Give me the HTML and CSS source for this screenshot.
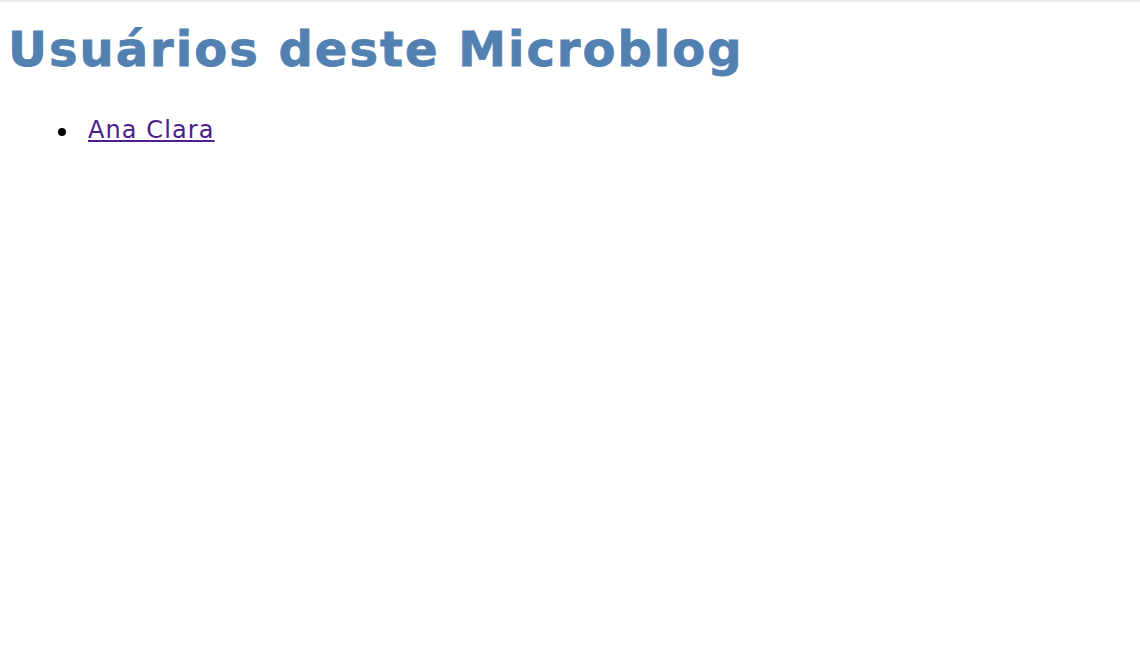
FILE: index.html
```html
<!DOCTYPE html>
<html lang="pt">
<head>
<meta charset="utf-8">
<title>Usuários deste Microblog</title>
<link rel="stylesheet" href="styles.css">
</head>
<body>
<div class="topbar"></div>
<main class="page">
  <h1 class="title">Usuários deste Microblog</h1>
  <ul class="users">
    <li class="user"><a class="user-link" href="#">Ana Clara</a></li>
  </ul>
</main>
</body>
</html>
```

FILE: styles.css
```css
html, body {
  margin: 0;
  padding: 0;
  background: #ffffff;
}
body {
  font-family: "DejaVu Sans", Verdana, sans-serif;
  color: #000;
}
.topbar {
  height: 2px;
  background: #ebebeb;
}
.page {
  padding: 0 8px;
}
.title {
  margin: 18px 0 0 0;
  font-size: 48px;
  font-weight: bold;
  letter-spacing: 2px;
  color: #5281b1;
  -webkit-text-stroke: 0.8px #5281b1;
  line-height: 58px;
}
.users {
  margin: 38px 0 0 0;
  padding-left: 50px;
  list-style: none;
  font-size: 24px;
  line-height: 28px;
}
.user {
  display: flex;
  align-items: flex-start;
}
.user::before {
  content: "";
  flex: none;
  width: 8px;
  height: 8px;
  margin-top: 12px;
  margin-right: 22px;
  border-radius: 50%;
  background: #000;
}
.user-link {
  color: #4b2189;
  letter-spacing: 1.1px;
}
```
